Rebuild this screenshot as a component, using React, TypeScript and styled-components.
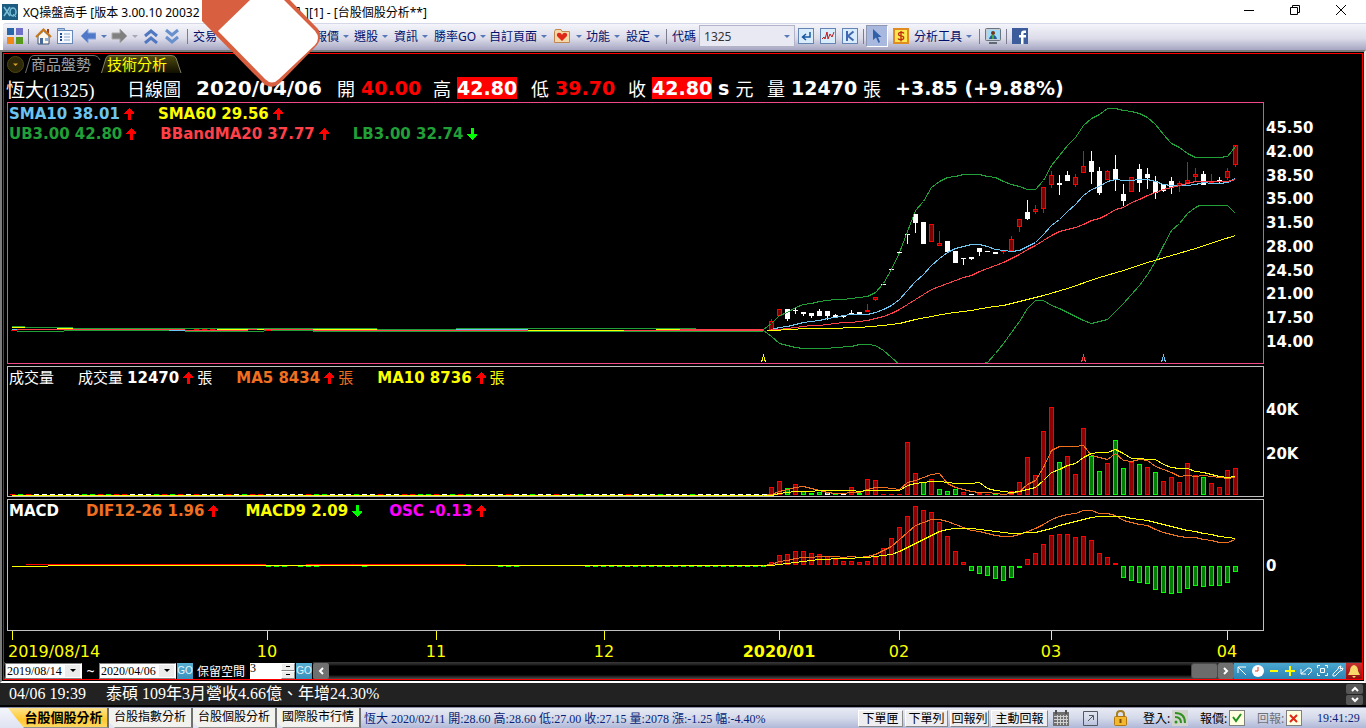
import React from 'react';
import styled, { createGlobalStyle, css } from 'styled-components';

const GlobalStyle = createGlobalStyle`
  * { box-sizing: border-box; }
  body { margin: 0; background: #fff; }
  button, input, select { font: inherit; margin: 0; padding: 0; border: 0; border-radius: 0; background: none; color: inherit; }
`;

const uiFont = '"Noto Sans", "Noto Sans CJK TC", sans-serif';
const serifFont = '"Liberation Serif", "Noto Sans CJK TC", serif';
const chartFont = '"DejaVu Sans", "Noto Sans CJK TC", sans-serif';

const colour = {
  sma10: '#6cc5f0',
  sma60: '#ffff00',
  band: '#22a038',
  mid: '#ff4048',
  orange: '#f07020',
  magenta: '#ff00ff',
  white: '#ffffff',
};

/* ---------- market data, in chart units ---------- */

const FIRST_X = 771;
const STEP = 8;
const FLAT_BARS = 95;

type Candle = [high: number, top: number, bottom: number, low: number, up: 0 | 1];

const candles: Candle[] = [
  [319, 321, 330, 330, 1], [309, 309, 316, 316, 1], [309, 309, 319, 321, 0], [308, 310, 311, 314, 0],
  [312, 312, 314, 316, 0], [313, 313, 316, 318, 0], [309, 311, 316, 316, 0], [311, 311, 316, 320, 0],
  [314, 315, 317, 318, 0], [316, 316, 317, 318, 0], [310, 313, 314, 314, 0], [312, 312, 314, 314, 0],
  [304, 310, 312, 312, 1], [297, 297, 300, 301, 1], [284, 284, 285, 285, 0], [269, 269, 270, 270, 0],
  [252, 252, 253, 253, 0], [234, 234, 235, 244, 0], [214, 214, 223, 233, 0], [222, 222, 244, 244, 0],
  [224, 224, 242, 242, 1], [231, 243, 246, 246, 1], [241, 241, 252, 252, 0], [251, 251, 263, 263, 0],
  [258, 258, 259, 265, 0], [257, 257, 259, 260, 0], [248, 248, 252, 256, 0], [251, 251, 252, 252, 0],
  [252, 252, 254, 254, 0], [251, 251, 252, 254, 1], [236, 239, 251, 251, 1], [219, 219, 227, 232, 1],
  [200, 212, 219, 220, 0], [205, 209, 212, 214, 1], [187, 187, 209, 213, 1], [171, 175, 185, 188, 1],
  [175, 183, 185, 195, 0], [171, 175, 181, 181, 0], [174, 177, 185, 187, 1], [151, 166, 173, 173, 1],
  [151, 161, 172, 184, 0], [167, 171, 193, 195, 0], [170, 171, 180, 180, 1], [155, 169, 180, 191, 0],
  [184, 194, 201, 206, 0], [177, 177, 192, 192, 1], [164, 169, 183, 192, 0], [168, 174, 178, 189, 0],
  [176, 181, 193, 199, 0], [184, 184, 191, 192, 0], [177, 181, 188, 194, 0], [181, 183, 186, 192, 1],
  [162, 180, 183, 183, 1], [168, 174, 177, 181, 1], [171, 174, 185, 185, 0], [174, 181, 183, 183, 1],
  [177, 180, 182, 183, 0], [168, 171, 178, 180, 1], [145, 145, 165, 167, 1],
];

const upperBand = [329, 323, 315, 312, 307, 304, 303, 301, 300, 299, 299, 298, 297, 296, 292, 283, 269, 252, 231, 210, 201, 187, 181, 177, 176, 174, 174, 174, 176, 177, 181, 184, 186, 189, 189, 180, 165, 155, 145, 137, 125, 118, 114, 108, 108, 110, 111, 113, 117, 124, 134, 143, 147, 153, 157, 157, 157, 157, 156, 146];
const sma10 = [329, 327, 326, 324, 322, 321, 320, 318, 317, 315, 314, 314, 314, 312, 309, 305, 299, 290, 281, 274, 265, 258, 252, 248, 246, 244, 244, 246, 249, 250, 251, 250, 246, 242, 234, 225, 219, 211, 204, 195, 189, 186, 181, 179, 180, 180, 179, 179, 181, 184, 185, 185, 185, 184, 182, 183, 183, 182, 178];
const midBand = [329, 329, 328, 327, 326, 325, 325, 324, 323, 322, 322, 321, 320, 318, 316, 313, 309, 304, 299, 294, 289, 286, 283, 280, 277, 275, 271, 268, 265, 262, 258, 254, 249, 245, 240, 235, 231, 229, 227, 224, 220, 218, 214, 209, 207, 202, 199, 195, 192, 189, 187, 185, 183, 181, 181, 181, 181, 181, 179];
const sma60 = '767,330 795,329 801,328 827,328 859,327 883,325 899,323 915,319 931,316 947,313 971,310 987,307 1003,305 1019,301 1035,297 1043,295 1067,288 1099,277 1123,270 1147,262 1171,255 1195,248 1219,240 1235,235';
const lowerBandA = '763,330 771,336 779,343 787,345 795,347 803,348 827,348 835,347 851,346 859,344 867,344 875,345 883,350 891,357 899,364';
const lowerBandB = '983,363 987,362 995,353 1003,343 1011,332 1019,321 1027,308 1035,300 1043,300 1051,305 1059,308 1067,312 1075,316 1083,320 1091,323 1099,321 1107,319 1115,311 1123,303 1131,294 1139,285 1147,274 1155,261 1163,245 1171,230 1179,223 1187,213 1195,207 1199,205 1227,205 1235,213';

type Volume = [top: number, kind: 'r' | 'g' | 'w'];
const volumes: Volume[] = [
  [487, 'r'], [481, 'r'], [488, 'g'], [484, 'r'], [491, 'g'], [493, 'g'], [492, 'g'], [492, 'w'], [494, 'g'], [494, 'w'],
  [487, 'r'], [493, 'g'], [479, 'r'], [480, 'r'], [494, 'r'], [494, 'r'], [494, 'r'], [442, 'r'], [473, 'r'], [482, 'g'],
  [479, 'r'], [489, 'g'], [491, 'g'], [489, 'g'], [492, 'r'], [494, 'w'], [493, 'r'], [494, 'r'], [494, 'g'], [494, 'r'],
  [491, 'r'], [482, 'r'], [457, 'r'], [475, 'r'], [431, 'r'], [407, 'r'], [462, 'g'], [456, 'r'], [474, 'r'], [428, 'r'],
  [456, 'g'], [471, 'g'], [463, 'r'], [440, 'g'], [468, 'g'], [462, 'r'], [464, 'g'], [467, 'r'], [472, 'g'], [481, 'r'],
  [477, 'r'], [482, 'r'], [463, 'r'], [475, 'r'], [477, 'g'], [483, 'r'], [487, 'r'], [470, 'r'], [468, 'r'],
];
const flatVolumes = 'rgrwwwwwwggrgrrwwwgrgrwrwwwrwgrrwwwwwrggwwwgwwrwwrrggrwgrgwwwwrwwgwwrwwgwwwwwrwwwgwwwgwwwwwwwww';
const volumeMa5 = [495, 494, 491, 489, 487, 486, 488, 490, 492, 493, 493, 492, 492, 489, 487, 487, 488, 489, 482, 480, 477, 474, 473, 483, 487, 489, 491, 492, 492, 493, 494, 493, 491, 484, 480, 467, 450, 446, 446, 446, 445, 455, 457, 459, 453, 460, 461, 459, 460, 466, 469, 472, 476, 475, 476, 475, 476, 477, 478, 477];
const volumeMa10 = [495, 495, 493, 492, 491, 491, 491, 490, 490, 490, 490, 490, 491, 490, 490, 490, 490, 490, 485, 483, 482, 481, 481, 482, 483, 483, 483, 482, 488, 490, 491, 492, 491, 489, 487, 480, 472, 469, 465, 463, 457, 453, 452, 452, 449, 453, 458, 458, 459, 459, 464, 467, 468, 468, 471, 472, 474, 476, 477, 476];

const histogram = [562, 555, 554, 551, 551, 553, 554, 556, 559, 561, 561, 562, 561, 557, 548, 538, 527, 516, 506, 510, 512, 522, 536, 551, 562, 571, 574, 576, 579, 581, 578, 568, 559, 553, 544, 535, 534, 534, 537, 536, 540, 553, 557, 563, 578, 581, 583, 584, 590, 593, 594, 593, 589, 586, 587, 586, 586, 583, 572];
const dif = [565, 564, 561, 560, 558, 557, 557, 556, 556, 556, 557, 556, 557, 556, 554, 550, 546, 539, 532, 525, 522, 519, 519, 521, 524, 527, 530, 531, 533, 535, 536, 536, 534, 531, 528, 524, 519, 516, 514, 513, 510, 510, 513, 513, 515, 520, 522, 524, 525, 529, 532, 534, 536, 537, 537, 539, 540, 542, 542, 539];
const macd9 = [565, 565, 564, 563, 562, 561, 560, 559, 559, 558, 558, 558, 557, 557, 556, 555, 554, 551, 547, 543, 539, 535, 531, 529, 528, 528, 528, 529, 530, 531, 532, 533, 533, 532, 532, 530, 528, 525, 523, 521, 519, 517, 516, 516, 516, 516, 518, 519, 520, 522, 524, 526, 528, 530, 531, 533, 534, 536, 537, 538];

const line = (values: number[], startX: number) => values.map((y, i) => `${startX + i * STEP},${y}`).join(' ');

/* quiet stretch before the rally: [x1, x2, y, colour] */
const flatSegments: [number, number, number, string][] = [
  [12, 25, 326, colour.band], [25, 73, 327, colour.band], [73, 377, 328, colour.band], [377, 456, 329, colour.band],
  [456, 696, 328, colour.band], [696, 763, 329, colour.band], [17, 64, 331, colour.band], [64, 185, 330, colour.band],
  [185, 264, 331, colour.band], [264, 313, 330, colour.band], [313, 763, 331, colour.band],
  [11, 17, 330, '#ff0000'], [17, 185, 329, colour.mid], [185, 248, 330, colour.mid], [248, 313, 329, colour.mid],
  [313, 528, 330, colour.mid], [528, 763, 330, colour.mid], [680, 763, 329, colour.mid],
  [169, 185, 330, colour.sma10], [12, 17, 329, colour.sma10], [456, 528, 329, colour.sma10],
  [12, 25, 327, colour.sma60], [57, 73, 328, colour.sma60], [217, 248, 329, colour.sma60], [257, 264, 329, colour.sma60],
  [313, 377, 329, colour.sma60], [528, 624, 330, colour.sma60], [656, 680, 329, colour.sma60],
  [194, 199, 329, '#ff0000'], [202, 207, 329, '#ff0000'], [210, 215, 329, '#ff0000'], [266, 271, 330, '#ff0000'],
];

const priceTicks = ['45.50', '42.00', '38.50', '35.00', '31.50', '28.00', '24.50', '21.00', '17.50', '14.00'];

const months: { label: string; span: number; bold?: boolean; first?: boolean }[] = [
  { label: '2019/08/14', span: 255, first: true },
  { label: '10', span: 169 },
  { label: '11', span: 168 },
  { label: '12', span: 175 },
  { label: '2020/01', span: 120, bold: true },
  { label: '02', span: 152 },
  { label: '03', span: 176 },
  { label: '04', span: 37 },
];

/* ---------- title bar ---------- */

const Page = styled.div`
  position: relative;
  display: flex;
  flex-direction: column;
  min-width: 1240px;
  font-family: ${uiFont};
  font-size: 12px;
`;

const TitleBar = styled.header`
  display: flex;
  align-items: center;
  height: 23px;
  padding-left: 2px;
  background: #fff;
  color: #000;
  white-space: nowrap;
`;

const TitleStart = styled.span`
  width: 275px;
  padding-left: 5px;
`;

const WindowButtons = styled.div`
  display: flex;
  align-self: flex-start;
  margin-left: auto;
  padding-right: 2px;
`;

const WindowButton = styled.button`
  display: grid;
  place-items: center;
  width: 46px;
  height: 20px;
`;

/* ---------- toolbar ---------- */

const Toolbar = styled.nav`
  display: flex;
  align-items: center;
  height: 27px;
  margin-left: 3px;
  padding: 0 0 2px 4px;
  border-top: 1px solid #d4d8e8;
  border-top-left-radius: 3px;
  background: linear-gradient(#f4f4fa, #dcdcea 55%, #a6a6c2);
  color: #00106b;
  white-space: nowrap;
`;

const ToolButton = styled.button<{ $w?: number; $pressed?: boolean }>`
  display: flex;
  align-items: center;
  justify-content: center;
  flex: none;
  width: ${(p) => p.$w ?? 22}px;
  height: 22px;
  ${(p) =>
    p.$pressed &&
    css`
      background: #a9b8df;
      border: 1px solid;
      border-color: #8f97b0 #fff #fff #8f97b0;
    `}
`;

const Separator = styled.span<{ $tight?: boolean }>`
  flex: none;
  width: 1px;
  height: 15px;
  margin: 0 ${(p) => (p.$tight ? 2 : 5)}px;
  background: #7c7c90;
`;

const MenuButton = styled.button<{ $w: number }>`
  display: flex;
  align-items: center;
  flex: none;
  gap: 4px;
  width: ${(p) => p.$w}px;
  height: 22px;
  text-align: left;
`;

const CaretShape = styled.span<{ $muted?: boolean }>`
  flex: none;
  border: 3px solid transparent;
  border-top-color: ${(p) => (p.$muted ? '#a8a8b4' : '#5878b8')};
  border-bottom-width: 0;
`;

const CodeLabel = styled.label`
  padding-right: 3px;
`;

const CodeBox = styled.span`
  display: flex;
  align-items: center;
  width: 96px;
  height: 22px;
  padding: 0 4px;
  border: 1px solid #b4b4c8;
  background: #e9e9f3;
`;

const CodeInput = styled.input`
  flex: 1;
  min-width: 0;
  color: #333;
  outline: none;
`;

/* ---------- workspace ---------- */

const WorkspaceFrame = styled.main`
  padding: 1px;
  border: 2px solid #7c7c7c;
  border-right-color: #e8e8e8;
  border-bottom-color: #fff;
  background: #000;
`;

const Workspace = styled.div`
  border: 1px solid #ff0000;
  color: #fff;
`;

const ViewTabs = styled.div`
  display: flex;
  align-items: center;
  height: 20px;
  padding-left: 1px;
`;

const ViewTab = styled.button<{ $active?: boolean }>`
  position: relative;
  width: ${(p) => (p.$active ? 82 : 76)}px;
  height: 20px;
  padding-left: 6px;
  font-size: 15px;
  line-height: 20px;
  text-align: left;
  white-space: nowrap;
  color: ${(p) => (p.$active ? '#ffff00' : '#a0a0a0')};
`;

const TabOutline = styled.svg`
  position: absolute;
  inset: 0;
`;

const TabText = styled.span`
  position: relative;
`;

const QuoteRow = styled.div`
  display: grid;
  grid-template-columns: 121px 69px 141px 96px 98px 97px 139px 128px auto;
  align-items: center;
  height: 28px;
  padding-left: 2px;
  font-family: ${chartFont};
  font-size: 19px;
  font-weight: bold;
  white-space: nowrap;
`;

const StockName = styled.span`
  font-family: ${serifFont};
  font-weight: normal;
`;

const QuoteDate = styled.span`
  font-size: 20px;
`;

const QuoteField = styled.span`
  display: flex;
  align-items: center;
  gap: 6px;
`;

const QuoteLabel = styled.span`
  font-size: 18px;
  font-weight: normal;
`;

const QuoteValue = styled.span<{ $red?: boolean; $limit?: boolean }>`
  height: 22px;
  line-height: 22px;
  color: ${(p) => (p.$red ? '#ff0000' : '#fff')};
  background: ${(p) => (p.$limit ? '#ff0000' : 'transparent')};
`;

const Panes = styled.div`
  display: grid;
  grid-template-columns: minmax(0, 1fr) 98px;
  row-gap: 2px;
  padding-left: 3px;
`;

const Pane = styled.section<{ $h: number; $accent?: boolean }>`
  display: grid;
  height: ${(p) => p.$h}px;
  border: 1px solid ${(p) => (p.$accent ? '#f04888' : '#c0c0c0')};
  overflow: hidden;
`;

const Plot = styled.svg`
  grid-area: 1 / 1;
  display: block;
  width: 100%;
  height: 100%;
`;

const Legend = styled.div`
  grid-area: 1 / 1;
  align-self: start;
  padding: 1px 0 0 1px;
  font-family: ${chartFont};
  font-size: 15px;
  font-weight: bold;
`;

const LegendRow = styled.div<{ $gap?: number }>`
  display: flex;
  gap: ${(p) => p.$gap ?? 24}px;
  height: 20px;
  line-height: 20px;
  white-space: nowrap;
`;

const LegendItem = styled.span<{ $c: string }>`
  display: flex;
  align-items: center;
  gap: 4px;
  color: ${(p) => p.$c};
`;

const Cjk = styled.span`
  font-weight: normal;
`;

const Scale = styled.div<{ $top: number; $bottom?: number; $gap?: number; $spread?: boolean }>`
  display: flex;
  flex-direction: column;
  justify-content: ${(p) => (p.$spread ? 'space-between' : 'flex-start')};
  gap: ${(p) => p.$gap ?? 0}px;
  padding: ${(p) => p.$top}px 0 ${(p) => p.$bottom ?? 0}px 2px;
  font-family: ${chartFont};
  font-size: 15px;
  font-weight: bold;
  line-height: 20px;
`;

const TimeAxis = styled.div`
  display: flex;
  height: 31px;
  margin-right: 98px;
  padding-left: 8px;
  font-family: ${chartFont};
  font-size: 16px;
  color: #ffff00;
`;

const Month = styled.div<{ $span: number }>`
  flex: ${(p) => p.$span} 0 0;
  min-width: 0;
`;

const Tick = styled.div`
  width: 1px;
  height: 9px;
  background: #ffff00;
`;

const MonthLabel = styled.div<{ $first?: boolean; $bold?: boolean }>`
  width: 100px;
  margin-left: ${(p) => (p.$first ? -4 : -50)}px;
  line-height: 24px;
  text-align: ${(p) => (p.$first ? 'left' : 'center')};
  font-weight: ${(p) => (p.$bold ? 'bold' : 'normal')};
`;

/* ---------- range controls ---------- */

const RangeBar = styled.div`
  display: flex;
  align-items: center;
  height: 17px;
  padding-left: 1px;
  background: linear-gradient(#3a3a3a, #1c1c1c 3px, #000 4px, #000 13px, #1c1c1c 14px, #4a4a4a);
  font-size: 12px;
  white-space: nowrap;
`;

const RangeForm = styled.span`
  display: flex;
  align-items: center;
  align-self: stretch;
  background: #000;
`;

const DateBox = styled.span`
  position: relative;
  display: flex;
  align-items: center;
  width: 77px;
  height: 16px;
  border: 1px solid #808080;
  border-right-color: #fff;
  background: #fff;
  color: #000;
  font-family: ${serifFont};
`;

const DateSelect = styled.select`
  width: 100%;
  height: 14px;
  padding-left: 1px;
  appearance: none;
  outline: none;
`;

const DropMark = styled.span`
  position: absolute;
  right: 1px;
  top: 1px;
  display: grid;
  place-items: center;
  width: 15px;
  height: 12px;
  background: #ececec;
  pointer-events: none;
  &::after {
    content: '';
    border: 3px solid transparent;
    border-top-color: #000;
    border-bottom-width: 0;
  }
`;

const Tilde = styled.span`
  width: 17px;
  font-size: 14px;
  line-height: 16px;
  text-align: center;
`;

const GoButton = styled.button`
  width: 16px;
  height: 16px;
  margin: 0 1px;
  background: linear-gradient(#58b0d4, #3a90bc);
  color: #e4f6ff;
  font-family: "Liberation Sans", sans-serif;
  font-size: 10px;
  line-height: 16px;
`;

const SpacingLabel = styled.label`
  padding: 0 5px 0 3px;
`;

const SpinBox = styled.span`
  display: flex;
  width: 45px;
  height: 16px;
  background: #ececec;
  color: #000;
  font-family: ${serifFont};
`;

const SpinInput = styled.input`
  width: 31px;
  height: 12px;
  background: #fff;
  box-shadow: 0 4px #fff;
  outline: none;
`;

const SpinButtons = styled.span`
  display: grid;
  grid-template-rows: 1fr 1fr;
  flex: 1;
`;

const SpinButton = styled.button`
  display: grid;
  place-items: center;
  border: 1px solid;
  border-color: #fff #888 #888 #fff;
  &::after {
    content: '';
    width: 4px;
    height: 1px;
    background: #000;
  }
`;

const ScrollTrack = styled.div`
  flex: 1;
  display: flex;
  justify-content: flex-end;
`;

const ScrollThumb = styled.div`
  width: 27px;
  height: 16px;
  border: 1px solid #4a4a4a;
  border-radius: 3px;
  background: #6c6c6c;
`;

const ScrollButton = styled.button<{ $small?: boolean }>`
  display: grid;
  place-items: center;
  width: ${(p) => (p.$small ? 17 : 16)}px;
  height: ${(p) => (p.$small ? 10 : 16)}px;
  border-radius: 2px;
  background: ${(p) => (p.$small ? '#565656' : '#707070')};
`;

const ChartTool = styled.button<{ $alert?: boolean }>`
  display: grid;
  place-items: center;
  width: 16px;
  height: 16px;
  background: ${(p) => (p.$alert ? 'linear-gradient(#c83030, #901010)' : 'linear-gradient(#4aa8d0, #2c84b4)')};
`;

/* ---------- news and status ---------- */

const NewsBar = styled.div`
  display: flex;
  align-items: center;
  height: 24px;
  padding-left: 9px;
  padding-right: 3px;
  border-bottom: 2px solid #000;
  background: #222;
  color: #fff;
  font-family: ${serifFont};
  font-size: 16px;
  line-height: 20px;
`;

const NewsTime = styled.time`
  width: 97px;
`;

const NewsScroll = styled.div`
  display: grid;
  gap: 1px;
  margin-left: auto;
`;

const StatusBar = styled.footer`
  display: flex;
  align-items: center;
  height: 21px;
  border-top: 1px solid #8c90a8;
  background: linear-gradient(#e8eaf4, #d4daea 50%, #b0b8d8);
  color: #000;
  white-space: nowrap;
`;

const SheetTabs = styled.div`
  display: flex;
  align-self: stretch;
  padding-left: 8px;
  background: linear-gradient(#f4f6fc, #dfe3f2);
`;

const SheetTab = styled.button<{ $active?: boolean }>`
  width: ${(p) => (p.$active ? 101 : 84)}px;
  height: 20px;
  padding: 0 0 2px ${(p) => (p.$active ? 12 : 0)}px;
  border-right: 2px solid #707070;
  border-bottom: 1px solid #909090;
  background: ${(p) => (p.$active ? 'linear-gradient(#ffe48c, #ffc830 60%, #ffd860)' : '#f2f2ee')};
  clip-path: ${(p) =>
    p.$active
      ? 'polygon(0 0, 100% 0, 100% 100%, 16px 100%)'
      : 'polygon(0 0, 100% 0, 100% 100%, 6px 100%, 0 14px)'};
  font-size: ${(p) => (p.$active ? 13 : 12)}px;
  font-weight: ${(p) => (p.$active ? 'bold' : 'normal')};
  line-height: 16px;
`;

const SheetQuote = styled.span`
  flex: 1;
  padding-left: 3px;
  color: #0a1f78;
  font-family: ${serifFont};
`;

const PanelButtons = styled.div`
  display: flex;
  gap: 2px;
`;

const PanelButton = styled.button<{ $w: number }>`
  width: ${(p) => p.$w}px;
  height: 17px;
  border: 1px solid;
  border-color: #fff #888 #888 #fff;
  background: #eeeef0;
  line-height: 15px;
`;

const StatusGroup = styled.div`
  display: flex;
  align-items: center;
`;

const StatusIconButton = styled.button<{ $w: number }>`
  display: flex;
  align-items: center;
  justify-content: flex-start;
  width: ${(p) => p.$w}px;
`;

const StatusLabel = styled.span<{ $muted?: boolean }>`
  width: 29px;
  color: ${(p) => (p.$muted ? '#707078' : '#000')};
`;

const Clock = styled.time`
  width: 49px;
  color: #0a1f78;
  font-family: ${serifFont};
`;

const Sticker = styled.svg`
  position: absolute;
  left: 202px;
  top: 0;
`;

/* ---------- small drawings ---------- */

const Arrow = ({ down }: { down?: boolean }) => (
  <svg width="10" height="12" viewBox="0 0 10 12" shapeRendering="crispEdges" aria-hidden="true">
    <path
      d={down ? 'M5 12 L10 7 V6 H7 V0 H4 V6 H0 V7 Z' : 'M5 0 L10 5 V6 H7 V12 H4 V6 H0 V5 Z'}
      fill={down ? '#00ff00' : '#ff0000'}
    />
  </svg>
);

const Caret = ({ muted }: { muted?: boolean }) => <CaretShape $muted={muted} />;

const Menu = ({ label, w }: { label: string; w: number }) => (
  <MenuButton $w={w}>
    {label}
    <Caret />
  </MenuButton>
);

const ArrowLeftShape = 'M1 8 L8 1 V5 H16 V11 H8 V15 Z';

const CandleMark = ({ x, c }: { x: number; c: Candle }) => {
  const [high, top, bottom, low, up] = c;
  return (
    <g>
      <rect x={x} y={high} width="1" height={low - high} fill={up ? '#ff0000' : '#fff'} />
      <rect x={x - 2} y={top} width="5" height={bottom - top} fill={up ? '#ff0000' : '#fff'} />
      {up && bottom - top > 2 ? <rect x={x - 1} y={top + 1} width="3" height={bottom - top - 2} fill="#800000" /> : null}
    </g>
  );
};

const Bar = ({ x, y1, y2, kind }: { x: number; y1: number; y2: number; kind: string }) => {
  const edge = kind === 'r' ? '#ff0000' : kind === 'g' ? '#00ff00' : '#ffffff';
  const fill = kind === 'r' ? '#900000' : kind === 'g' ? '#008000' : '#808080';
  return (
    <g>
      <rect x={x - 2} y={y1} width="5" height={y2 - y1} fill={edge} />
      {y2 - y1 > 2 ? <rect x={x - 1} y={y1 + 1} width="3" height={y2 - y1 - 2} fill={fill} /> : null}
    </g>
  );
};

const Marker = ({ x, c }: { x: number; c: string }) => (
  <polyline points={`${x - 2},362 ${x - 1},358 ${x},355 ${x + 1},358 ${x + 2},362`} stroke={c} />
);

const PricePlot = () => (
  <Plot viewBox="8 103 1255 260" preserveAspectRatio="none" shapeRendering="crispEdges">
    {candles.map((c, i) => (
      <CandleMark key={i} x={FIRST_X + i * STEP} c={c} />
    ))}
    {flatSegments.map(([a, b, y, c], i) => (
      <rect key={i} x={a} y={y} width={b - a} height="1" fill={c} />
    ))}
    <g fill="none" strokeWidth="1" transform="translate(0.5 0.5)">
      <polyline points={line(upperBand, 763)} stroke={colour.band} />
      <polyline points={lowerBandA} stroke={colour.band} />
      <polyline points={lowerBandB} stroke={colour.band} />
      <polyline points={line(sma10, FIRST_X)} stroke={colour.sma10} />
      <polyline points={line(midBand, FIRST_X)} stroke={colour.mid} />
      <polyline points={sma60} stroke={colour.sma60} />
      <Marker x={763} c={colour.sma60} />
      <Marker x={1083} c={colour.mid} />
      <Marker x={1163} c={colour.sma10} />
    </g>
  </Plot>
);

const VolumePlot = () => (
  <Plot viewBox="8 367 1255 129" preserveAspectRatio="none" shapeRendering="crispEdges">
    {flatVolumes.slice(0, FLAT_BARS).split('').map((k, i) => (
      <Bar key={i} x={12 + i * STEP} y1={494} y2={495} kind={k} />
    ))}
    {volumes.map(([top, kind], i) => (
      <Bar key={i} x={FIRST_X + i * STEP} y1={top} y2={495} kind={kind} />
    ))}
    <rect x="12" y="495" width="752" height="1" fill="#ffff00" />
    <g fill="none" strokeWidth="1" transform="translate(0.5 0.5)">
      <polyline points={line(volumeMa5, 763)} stroke={colour.orange} />
      <polyline points={line(volumeMa10, 763)} stroke={colour.sma60} />
    </g>
  </Plot>
);

const MacdPlot = () => (
  <Plot viewBox="8 500 1255 130" preserveAspectRatio="none" shapeRendering="crispEdges">
    {histogram.map((y, i) => (
      <Bar key={i} x={FIRST_X + i * STEP} y1={y < 565 ? y : 566} y2={y < 565 ? 565 : y} kind={y < 565 ? 'r' : 'g'} />
    ))}
    <rect x="12" y="566" width="36" height="1" fill="#ffff00" />
    <rect x="48" y="565" width="720" height="1" fill="#ffff00" />
    <rect x="26" y="564" width="240" height="1" fill="#ff0000" />
    <rect x="306" y="564" width="160" height="1" fill="#ff0000" />
    {Array.from({ length: 23 }, (_, i) => (
      <rect key={i} x={585 + i * STEP} y="566" width="5" height="1" fill="#00ff00" />
    ))}
    {[266, 274, 282, 298, 306, 314, 362, 498, 506, 514].map((x) => (
      <rect key={x} x={x} y="566" width="5" height="1" fill="#00ff00" />
    ))}
    <g fill="none" strokeWidth="1" transform="translate(0.5 0.5)">
      <polyline points={line(dif, 763)} stroke={colour.orange} />
      <polyline points={line(macd9, 763)} stroke={colour.sma60} />
    </g>
  </Plot>
);

export default function App() {
  return (
    <Page>
      <GlobalStyle />
      <TitleBar>
        <svg width="16" height="16" viewBox="0 0 16 16" aria-hidden="true">
          <rect width="16" height="16" fill="#1c5c80" />
          <path d="M2 3 L8 12 M8 3 L2 12" stroke="#7cc0d8" strokeWidth="1.5" />
          <ellipse cx="11" cy="8" rx="3" ry="4" fill="none" stroke="#7cc0d8" strokeWidth="1.5" />
          <path d="M11 10 L14 13" stroke="#7cc0d8" />
        </svg>
        <TitleStart>XQ操盤高手 [版本 3.00.10 20032</TitleStart>
        <span>入][1] - [台股個股分析**]</span>
        <WindowButtons>
          <WindowButton aria-label="Minimize">
            <svg width="10" height="10"><path d="M0 5.5 H10" stroke="#000" /></svg>
          </WindowButton>
          <WindowButton aria-label="Restore">
            <svg width="10" height="10"><path d="M.5 2.5 H7.5 V9.5 H.5 Z M2.5 2.5 V.5 H9.5 V7.5 H7.5" fill="none" stroke="#000" /></svg>
          </WindowButton>
          <WindowButton aria-label="Close">
            <svg width="10" height="10"><path d="M0 0 L10 10 M10 0 L0 10" stroke="#000" /></svg>
          </WindowButton>
        </WindowButtons>
      </TitleBar>

      <Toolbar>
        <ToolButton $w={16} aria-label="Layout">
          <svg width="16" height="16">
            <rect width="7" height="7" fill="#2868a8" />
            <rect x="9" width="7" height="7" fill="#7070c8" />
            <rect y="9" width="7" height="7" fill="#f08818" />
            <rect x="9" y="9" width="7" height="7" fill="#58981c" />
          </svg>
        </ToolButton>
        <Separator />
        <ToolButton $w={18} aria-label="Home">
          <svg width="17" height="17" viewBox="0 0 17 17">
            <path d="M3 8 V16 H14 V8 L8.5 3 Z" fill="#fff8e8" stroke="#3c5078" />
            <rect x="12" y="1" width="2" height="4" fill="#a04020" />
            <path d="M1 9 L8.5 1.5 L16 9" fill="none" stroke="#c87818" strokeWidth="2" />
            <rect x="5" y="10" width="3" height="6" fill="#486898" />
            <rect x="10" y="10" width="3" height="3" fill="#88b0e0" />
          </svg>
        </ToolButton>
        <ToolButton $w={26} aria-label="Menu list">
          <svg width="16" height="16" viewBox="0 0 16 16">
            <path d="M.5 2.5 V.5 H7.5 V2.5" fill="#a8c8f0" stroke="#6888b8" />
            <rect x=".5" y="2.5" width="15" height="13" fill="#f4f8ff" stroke="#6888b8" />
            <path d="M3 6 H5 M3 9 H5 M3 12 H5" stroke="#204890" strokeWidth="2" />
            <path d="M7 6 H13 M7 9 H13 M7 12 H13" stroke="#90a8d0" />
          </svg>
        </ToolButton>
        <ToolButton $w={20} aria-label="Back">
          <svg width="16" height="16"><path d={ArrowLeftShape} fill="#5078c8" stroke="#88a4dc" /></svg>
        </ToolButton>
        <ToolButton $w={11} aria-label="Back history"><Caret /></ToolButton>
        <ToolButton $w={20} aria-label="Forward">
          <svg width="16" height="16"><path d={ArrowLeftShape} fill="#808080" stroke="#a8a8a8" transform="rotate(180 8.5 8)" /></svg>
        </ToolButton>
        <ToolButton $w={11} aria-label="Forward history"><Caret muted /></ToolButton>
        <ToolButton aria-label="Previous">
          <svg width="14" height="15"><path d="M1 7 L7 2 L13 7 M1 14 L7 9 L13 14" fill="none" stroke="#5078c0" strokeWidth="3" /></svg>
        </ToolButton>
        <ToolButton $w={20} aria-label="Next">
          <svg width="14" height="15"><path d="M1 1 L7 6 L13 1 M1 8 L7 13 L13 8" fill="none" stroke="#6890cc" strokeWidth="3" /></svg>
        </ToolButton>
        <Separator />
        <Menu label="交易" w={122} />
        <Menu label="報價" w={39} />
        <Menu label="選股" w={40} />
        <Menu label="資訊" w={40} />
        <Menu label="勝率GO" w={55} />
        <Menu label="自訂頁面" w={63} />
        <ToolButton $w={20} aria-label="Favorites">
          <svg width="17" height="15" viewBox="0 0 17 15">
            <path d="M.5 2.5 V13.5 H15.5 V2.5 H8 L7 .5 H1.5 Z" fill="#f4d8a8" stroke="#c08850" />
            <path d="M8 12 L3 7 C2 3 7 3 8 6 C9 3 14 3 13 7 Z" fill="#e02818" />
          </svg>
        </ToolButton>
        <ToolButton $w={14} aria-label="Favorites list"><Caret /></ToolButton>
        <Menu label="功能" w={40} />
        <Menu label="設定" w={35} />
        <Separator />
        <CodeLabel htmlFor="code">代碼</CodeLabel>
        <CodeBox>
          <CodeInput id="code" defaultValue="1325" />
          <Caret />
        </CodeBox>
        <ToolButton aria-label="Enter">
          <svg width="16" height="16">
            <rect x=".5" y=".5" width="15" height="15" fill="#d8ecfc" stroke="#6484b4" />
            <path d="M12 4 V9 H5 M8 6 L4.5 9 L8 12" fill="none" stroke="#1858a0" strokeWidth="1.5" />
          </svg>
        </ToolButton>
        <ToolButton aria-label="Line chart">
          <svg width="16" height="16">
            <rect x=".5" y=".5" width="15" height="15" fill="#d8ecfc" stroke="#6484b4" />
            <path d="M2 11 L4 9 L5 11 L7 4 L8 11 L10 6 L12 9 L14 4" fill="none" stroke="#c81818" />
          </svg>
        </ToolButton>
        <ToolButton aria-label="K line">
          <svg width="16" height="16">
            <rect x=".5" y=".5" width="15" height="15" fill="#d8ecfc" stroke="#6484b4" />
            <path d="M5 3 V13 M11.500 3.500 L6 8 L11.500 12.500" fill="none" stroke="#4068b0" strokeWidth="2" />
          </svg>
        </ToolButton>
        <Separator $tight />
        <ToolButton $pressed aria-label="Pointer">
          <svg width="12" height="16" viewBox="0 0 12 16">
            <path d="M2 1 V12 L5 9.500 L7.500 15 L9 14 L7 9 H10.500 Z" fill="#3060a8" />
          </svg>
        </ToolButton>
        <ToolButton $w={26} aria-label="Price alert">
          <svg width="16" height="16">
            <rect x="1" y="1" width="14" height="14" fill="#ffe850" stroke="#e08c20" strokeWidth="2" />
            <path d="M11 5.500 C10 3.500 5 4 5.500 6.500 C6 8.500 11 7.500 10.700 10 C10.500 12.500 5.500 12 5 10.500 M8 3 V13.500" fill="none" stroke="#c03010" strokeWidth="1.300" />
          </svg>
        </ToolButton>
        <Menu label="分析工具" w={60} />
        <Separator />
        <ToolButton $w={16} aria-label="Service">
          <svg width="16" height="16">
            <rect x=".5" y=".5" width="15" height="12" rx="1" fill="#c4ccd4" stroke="#687480" />
            <rect x="2" y="2" width="12" height="9" fill="#a0dcf8" />
            <circle cx="8" cy="5" r="2" fill="#703818" />
            <path d="M4 11 Q5 7 8 7 Q11 7 12 11 Z" fill="#285898" />
            <rect x="7" y="7" width="2" height="4" fill="#48a848" />
            <path d="M4 15 H12" stroke="#606870" strokeWidth="2" />
          </svg>
        </ToolButton>
        <Separator />
        <ToolButton $w={16} aria-label="Facebook">
          <svg width="16" height="16">
            <rect width="16" height="16" fill="#3c5c9c" />
            <path d="M9 16 V9.500 H7 V7 H9 V5.500 C9 3.500 10 2.500 12 2.500 H14 V5 H12.500 C11.800 5 11.500 5.300 11.500 6 V7 H14 V9.500 H11.500 V16 Z" fill="#fff" />
          </svg>
        </ToolButton>
      </Toolbar>

      <WorkspaceFrame>
        <Workspace>
          <ViewTabs>
            <ToolButton $w={20} aria-label="View menu">
              <svg width="17" height="17">
                <circle cx="8.500" cy="8.500" r="8" fill="#2c2808" stroke="#504810" />
                <path d="M6 7.500 H11 L8.500 10 Z" fill="#e0a020" />
              </svg>
            </ToolButton>
            <ViewTab>
              <TabOutline width="80" height="20" aria-hidden="true">
                <path d="M.5 19 L5 4 Q6 1.500 9 1.500 H68 Q73 1.500 75 6" fill="none" stroke="#707070" />
              </TabOutline>
              <TabText>商品盤勢</TabText>
            </ViewTab>
            <ViewTab $active>
              <TabOutline width="82" height="20" aria-hidden="true">
                <defs>
                  <linearGradient id="tabFill" x1="0" y1="0" x2="0" y2="1">
                    <stop offset="0" stopColor="#504c10" />
                    <stop offset="1" stopColor="#100f00" />
                  </linearGradient>
                </defs>
                <path d="M.5 19 L5 4 Q6 1.500 9 1.500 H70 Q74 1.500 75 4 L80 19" fill="url(#tabFill)" stroke="#808060" />
              </TabOutline>
              <TabText>技術分析</TabText>
            </ViewTab>
          </ViewTabs>

          <QuoteRow>
            <StockName>恆大(1325)</StockName>
            <QuoteLabel>日線圖</QuoteLabel>
            <QuoteDate>2020/04/06</QuoteDate>
            <QuoteField><QuoteLabel>開</QuoteLabel><QuoteValue $red>40.00</QuoteValue></QuoteField>
            <QuoteField><QuoteLabel>高</QuoteLabel><QuoteValue $limit>42.80</QuoteValue></QuoteField>
            <QuoteField><QuoteLabel>低</QuoteLabel><QuoteValue $red>39.70</QuoteValue></QuoteField>
            <QuoteField>
              <QuoteLabel>收</QuoteLabel><QuoteValue $limit>42.80</QuoteValue><span>s</span><QuoteLabel>元</QuoteLabel>
            </QuoteField>
            <QuoteField><QuoteLabel>量</QuoteLabel><QuoteValue>12470</QuoteValue><QuoteLabel>張</QuoteLabel></QuoteField>
            <QuoteValue>+3.85 (+9.88%)</QuoteValue>
          </QuoteRow>

          <Panes>
            <Pane $h={262} $accent>
              <PricePlot />
              <Legend>
                <LegendRow>
                  <LegendItem $c={colour.sma10}>SMA10 38.01<Arrow /></LegendItem>
                  <LegendItem $c={colour.sma60}>SMA60 29.56<Arrow /></LegendItem>
                </LegendRow>
                <LegendRow>
                  <LegendItem $c={colour.band}>UB3.00 42.80<Arrow /></LegendItem>
                  <LegendItem $c={colour.mid}>BBandMA20 37.77<Arrow /></LegendItem>
                  <LegendItem $c={colour.band}>LB3.00 32.74<Arrow down /></LegendItem>
                </LegendRow>
              </Legend>
            </Pane>
            <Scale $top={16} $bottom={12} $spread>
              {priceTicks.map((t) => <span key={t}>{t}</span>)}
            </Scale>

            <Pane $h={131}>
              <VolumePlot />
              <Legend>
                <LegendRow>
                  <LegendItem $c={colour.white}><Cjk>成交量</Cjk></LegendItem>
                  <LegendItem $c={colour.white}><Cjk>成交量</Cjk> 12470<Arrow /><Cjk>張</Cjk></LegendItem>
                  <LegendItem $c={colour.orange}>MA5 8434<Arrow /><Cjk>張</Cjk></LegendItem>
                  <LegendItem $c={colour.sma60}>MA10 8736<Arrow /><Cjk>張</Cjk></LegendItem>
                </LegendRow>
              </Legend>
            </Pane>
            <Scale $top={34} $gap={24}>
              <span>40K</span>
              <span>20K</span>
            </Scale>

            <Pane $h={132}>
              <MacdPlot />
              <Legend>
                <LegendRow $gap={27}>
                  <LegendItem $c={colour.white}>MACD</LegendItem>
                  <LegendItem $c={colour.orange}>DIF12-26 1.96<Arrow /></LegendItem>
                  <LegendItem $c={colour.sma60}>MACD9 2.09<Arrow down /></LegendItem>
                  <LegendItem $c={colour.magenta}>OSC -0.13<Arrow /></LegendItem>
                </LegendRow>
              </Legend>
            </Pane>
            <Scale $top={57}>
              <span>0</span>
            </Scale>
          </Panes>

          <TimeAxis>
            {months.map((m) => (
              <Month key={m.label} $span={m.span}>
                <Tick />
                <MonthLabel $first={m.first} $bold={m.bold}>{m.label}</MonthLabel>
              </Month>
            ))}
          </TimeAxis>

          <RangeBar>
            <RangeForm>
              <DateBox>
                <DateSelect aria-label="Start date"><option>2019/08/14</option></DateSelect>
                <DropMark />
              </DateBox>
              <Tilde>~</Tilde>
              <DateBox>
                <DateSelect aria-label="End date"><option>2020/04/06</option></DateSelect>
                <DropMark />
              </DateBox>
              <GoButton>GO</GoButton>
              <SpacingLabel htmlFor="spacing">保留空間</SpacingLabel>
              <SpinBox>
                <SpinInput id="spacing" defaultValue="3" />
                <SpinButtons>
                  <SpinButton aria-label="Increase" />
                  <SpinButton aria-label="Decrease" />
                </SpinButtons>
              </SpinBox>
              <GoButton>GO</GoButton>
            </RangeForm>
            <ScrollButton aria-label="Scroll left">
              <svg width="6" height="8"><path d="M5 1 L2 4 L5 7" fill="none" stroke="#fff" strokeWidth="2" /></svg>
            </ScrollButton>
            <ScrollTrack><ScrollThumb /></ScrollTrack>
            <ScrollButton aria-label="Scroll right">
              <svg width="6" height="8"><path d="M1 1 L4 4 L1 7" fill="none" stroke="#fff" strokeWidth="2" /></svg>
            </ScrollButton>
            <ChartTool aria-label="Select">
              <svg width="12" height="12"><path d="M2 8 V2 H10 M2 2 L10 10" fill="none" stroke="#fff" /></svg>
            </ChartTool>
            <ChartTool aria-label="Time">
              <svg width="14" height="14"><circle cx="7" cy="7" r="6" fill="#fff" /><path d="M7 3 V7 H4" fill="none" stroke="#e04020" /></svg>
            </ChartTool>
            <ChartTool aria-label="Zoom out">
              <svg width="10" height="10"><path d="M1 5 H9" stroke="#ffff00" strokeWidth="2" /></svg>
            </ChartTool>
            <ChartTool aria-label="Zoom in">
              <svg width="10" height="10"><path d="M0 5 H10 M5 0 V10" stroke="#ffff00" strokeWidth="2" /></svg>
            </ChartTool>
            <ChartTool aria-label="Undo">
              <svg width="13" height="10"><path d="M1 3 V8 H6 M1 8 L8 2 Q13 2 11 6 L8 9" fill="none" stroke="#fff" /></svg>
            </ChartTool>
            <ChartTool aria-label="Fit">
              <svg width="11" height="11"><path d="M.5 3 V.5 H3 M8 .5 H10.500 V3 M10.500 8 V10.500 H8 M3 10.500 H.5 V8 M3.500 3.500 H7.500 V7.500 H3.500 Z" fill="none" stroke="#fff" /></svg>
            </ChartTool>
            <ChartTool aria-label="Settings">
              <svg width="12" height="12"><path d="M1 11 L1 9 L6 4 Q6 1 9 1 L8 4 L11 3 Q11 6 8 6 L3 11 Z" fill="none" stroke="#fff" /></svg>
            </ChartTool>
            <ChartTool $alert aria-label="Alert">
              <svg width="14" height="14"><path d="M7 1 Q3 2 3 7 L1 11 H13 L11 7 Q11 2 7 1 Z M5 12 H9 L7 14 Z" fill="#f8d868" /></svg>
            </ChartTool>
          </RangeBar>
        </Workspace>
      </WorkspaceFrame>

      <NewsBar>
        <NewsTime>04/06 19:39</NewsTime>
        <span>泰碩 109年3月營收4.66億、年增24.30%</span>
        <NewsScroll>
          <ScrollButton $small aria-label="Previous news">
            <svg width="8" height="6"><path d="M1 5 L4 2 L7 5" fill="none" stroke="#fff" strokeWidth="2" /></svg>
          </ScrollButton>
          <ScrollButton $small aria-label="Next news">
            <svg width="8" height="6"><path d="M1 1 L4 4 L7 1" fill="none" stroke="#fff" strokeWidth="2" /></svg>
          </ScrollButton>
        </NewsScroll>
      </NewsBar>

      <StatusBar>
        <SheetTabs>
          <SheetTab $active>台股個股分析</SheetTab>
          <SheetTab>台股指數分析</SheetTab>
          <SheetTab>台股個股分析</SheetTab>
          <SheetTab>國際股市行情</SheetTab>
        </SheetTabs>
        <SheetQuote>恆大 2020/02/11 開:28.60 高:28.60 低:27.00 收:27.15 量:2078 漲:-1.25 幅:-4.40%</SheetQuote>
        <PanelButtons>
          <PanelButton $w={45}>下單匣</PanelButton>
          <PanelButton $w={43}>下單列</PanelButton>
          <PanelButton $w={39}>回報列</PanelButton>
          <PanelButton $w={57}>主動回報</PanelButton>
        </PanelButtons>
        <StatusGroup>
          <StatusIconButton $w={35} aria-label="Calendar">
            <svg width="22" height="16">
              <rect x="5" y="2" width="16" height="14" fill="#707070" />
              <path d="M8 0 V4 M18 0 V4" stroke="#505050" strokeWidth="2" />
              <path d="M6 6.500 H20 M6 9.500 H20 M6 12.500 H20 M9.500 5 V15 M12.500 5 V15 M15.500 5 V15 M18.500 5 V15" stroke="#d0d0d0" />
            </svg>
          </StatusIconButton>
          <StatusIconButton $w={30} aria-label="Pop out">
            <svg width="15" height="15"><path d="M.5 .5 H14.500 V14.500 H.5 Z M5 10 L10 5 M6 4.500 H10.500 V9" fill="none" stroke="#505860" /></svg>
          </StatusIconButton>
          <StatusIconButton $w={30} aria-label="Lock">
            <svg width="15" height="16">
              <path d="M4 7 V4 Q4 1 7.500 1 Q11 1 11 4 V7" fill="none" stroke="#a88020" strokeWidth="2" />
              <rect x="1.500" y="6.500" width="12" height="9" rx="1" fill="#f4b830" stroke="#b07810" />
              <path d="M7.500 9 V13" stroke="#805008" strokeWidth="2" />
            </svg>
          </StatusIconButton>
          <StatusLabel>登入:</StatusLabel>
          <StatusIconButton $w={28} aria-label="Login status">
            <svg width="16" height="16">
              <rect width="16" height="16" fill="#d0d4cc" />
              <path d="M3 3 Q13 3 13 13 M3 7 Q9 7 9 13" fill="none" stroke="#309020" strokeWidth="2" />
              <circle cx="4" cy="12" r="1.500" fill="#309020" />
            </svg>
          </StatusIconButton>
          <StatusLabel>報價:</StatusLabel>
          <StatusIconButton $w={28} aria-label="Quote status">
            <svg width="16" height="16">
              <rect x=".5" y=".5" width="15" height="15" fill="#ffffe0" stroke="#808080" />
              <path d="M4 7 L7 11 L12 4" fill="none" stroke="#209020" strokeWidth="2" />
            </svg>
          </StatusIconButton>
          <StatusLabel $muted>回報:</StatusLabel>
          <StatusIconButton $w={31} aria-label="Report status">
            <svg width="16" height="16">
              <rect x=".5" y=".5" width="15" height="15" fill="#ffffe0" stroke="#808080" />
              <path d="M4 5 L11 12 M11 5 L4 12" fill="none" stroke="#e02818" strokeWidth="2" />
            </svg>
          </StatusIconButton>
          <Clock>19:41:29</Clock>
        </StatusGroup>
      </StatusBar>

      <Sticker width="122" height="90" viewBox="202 0 122 90" aria-hidden="true">
        <path d="M202 0 H290 L318 29 Q323 37 317 45 L281 82 Q272 91 263 83 L202 21 Z" fill="#d86040" />
        <path d="M218 31 L250 0 H284 L315 31 Q321 38 315 45 L279 79 Q272 86 265 79 Z" fill="#fff" />
      </Sticker>
    </Page>
  );
}
